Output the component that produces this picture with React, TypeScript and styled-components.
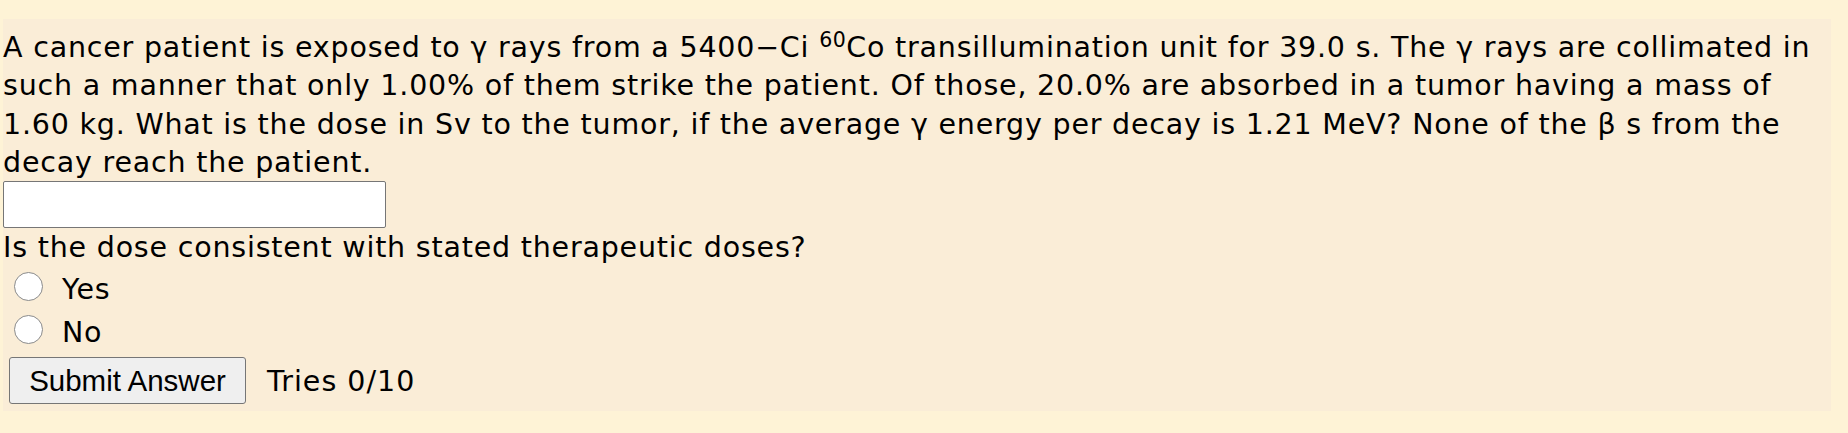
import React from 'react'
import styled, { createGlobalStyle } from 'styled-components'

const GlobalStyle = createGlobalStyle`
    body {
        margin: 0;
        background: #fef3d6;
        font-family: "DejaVu Sans", Verdana, sans-serif;
        color: #000;
    }
`

const Page = styled.div`
    padding: 19px 17px 22px 3px;
`

const Panel = styled.div`
    background: #faedd7;
    padding: 10px 0 7px 0;
    font-size: 28.5px;
    line-height: 38.3px;
    letter-spacing: 0.8px;
`

const Question = styled.div`
    padding-right: 4px;
`

const Sup = styled.sup`
    font-size: 0.72em;
    line-height: 0;
    vertical-align: 0.5em;
    letter-spacing: 0.5px;
`

const AnswerBox = styled.input`
    display: block;
    box-sizing: border-box;
    width: 383px;
    height: 47px;
    margin: -1px 0 0 0;
    background: #fff;
    border: 1px solid #767676;
    border-radius: 2px;
    padding: 0 4px;
    font-size: 24px;
`

const Prompt = styled.div`
    margin-top: 1px;
`

const Choice = styled.label`
    display: flex;
    align-items: flex-start;
    height: 43px;
`

const Radio = styled.input`
    appearance: none;
    box-sizing: border-box;
    width: 29px;
    height: 29px;
    margin: 5px 19px 0 11px;
    border: 1px solid #8a8a8a;
    border-radius: 50%;
    background: #fff;
`

const ChoiceText = styled.span`
    line-height: 43px;
    padding-top: 1px;
`

const SubmitRow = styled.div`
    display: flex;
    align-items: baseline;
    margin-top: 4px;
    gap: 21px;
`

const SubmitButton = styled.button`
    box-sizing: border-box;
    width: 237px;
    height: 47px;
    margin-left: 6px;
    padding: 0;
    background: #efefef;
    border: 1px solid #767676;
    border-radius: 3px;
    font-family: "Liberation Sans", Arial, sans-serif;
    font-size: 29.5px;
    letter-spacing: 0;
    color: #000;
`

const Tries = styled.span`
    letter-spacing: 1px;
`

const App: React.FunctionComponent = () => {
    return (
        <>
        <GlobalStyle />
        <Page>
            <Panel>
                <Question>
                    A cancer patient is exposed to γ rays from a 5400−Ci <Sup>60</Sup>Co transillumination unit for 39.0 s. The γ rays are collimated in such a manner that only 1.00% of them strike the patient. Of those, 20.0% are absorbed in a tumor having a mass of 1.60 kg. What is the dose in Sv to the tumor, if the average γ energy per decay is 1.21 MeV? None of the β s from the decay reach the patient.
                </Question>
                <AnswerBox type="text" />
                <Prompt>Is the dose consistent with stated therapeutic doses?</Prompt>
                <Choice>
                    <Radio type="radio" name="consistent" />
                    <ChoiceText>Yes</ChoiceText>
                </Choice>
                <Choice>
                    <Radio type="radio" name="consistent" />
                    <ChoiceText>No</ChoiceText>
                </Choice>
                <SubmitRow>
                    <SubmitButton>Submit Answer</SubmitButton>
                    <Tries>Tries 0/10</Tries>
                </SubmitRow>
            </Panel>
        </Page>
        </>
    )
}

export default App
